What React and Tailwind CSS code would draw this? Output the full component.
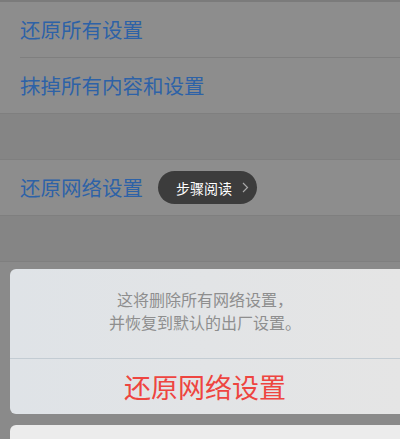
import React from 'react';

const font = { fontFamily: '"Noto Sans CJK SC", "Noto Sans", sans-serif' };

const Row = ({ label, inset, children }) => (
  <div className={`h-[56px] bg-[#8d8d8d] pl-5 ${inset ? '' : 'border-b border-[#7f7f7f]'}`}>
    <div className={`flex h-full items-center gap-[15px] ${inset ? 'border-b border-[#7f7f7f]' : ''}`}>
      <span className="whitespace-nowrap text-[20.5px] leading-none text-[#2d62a7]">{label}</span>
      {children}
    </div>
  </div>
);

const StepPill = () => (
  <div className="flex h-[33px] w-[99px] shrink-0 items-center rounded-full bg-[#3c3c3c] pl-[18px]">
    <span className="whitespace-nowrap text-[14px] leading-none text-white">步骤阅读</span>
    <svg className="ml-[10px]" width="7" height="11" viewBox="0 0 7 11" fill="none">
      <path d="M1 1l4.5 4.5L1 10" stroke="#a8a8a8" strokeWidth="1.2" />
    </svg>
  </div>
);

export default function App() {
  return (
    <div className="h-[439px] w-[400px] overflow-hidden bg-[#8d8d8d]" style={font}>
      <div className="h-[2px] bg-[#7b7b7b]" />
      <Row label="还原所有设置" inset />
      <Row label="抹掉所有内容和设置" />
      <div className="h-[46px] border-b border-[#7f7f7f] bg-[#858585]" />
      <Row label="还原网络设置">
        <StepPill />
      </Row>
      <div className="h-[46px] border-b border-[#7f7f7f] bg-[#858585]" />
      <div className="bg-[#8a8a8a] pt-[7px] pl-[10px]">
        <div className="w-[390px] overflow-hidden rounded-l-[6px] bg-gradient-to-r from-[#dfe3e7] to-[#e5e5e5]">
          <div className="flex h-[89px] flex-col items-center justify-center pb-[6px] text-[16px] leading-[23px] text-[#8e8e8e]">
            <p>这将删除所有网络设置，</p>
            <p>并恢复到默认的出厂设置。</p>
          </div>
          <div className="h-px bg-[#c3ccd3]" />
          <div className="flex h-[55px] items-center justify-center text-[27px] leading-none text-[#ee4540]">
            还原网络设置
          </div>
        </div>
        <div className="mt-[11px] h-[40px] w-[390px] rounded-tl-[6px] bg-[#ececec]" />
      </div>
    </div>
  );
}
